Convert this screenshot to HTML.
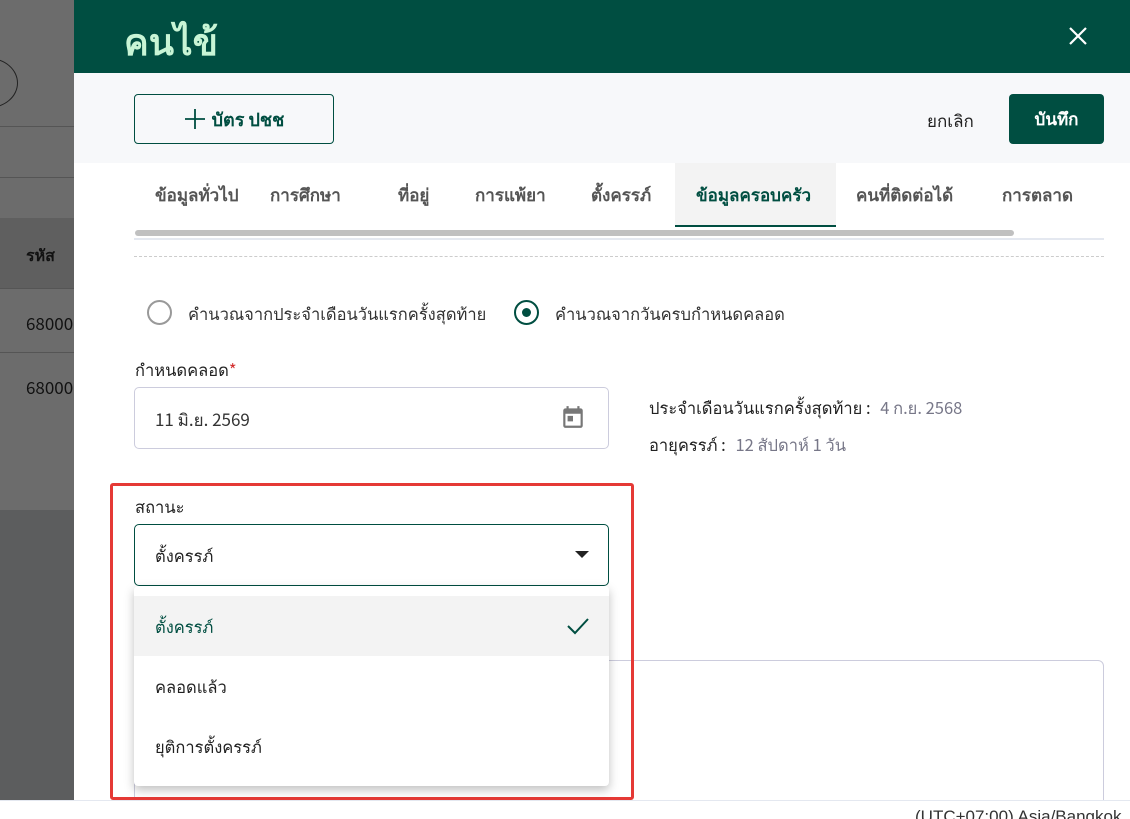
<!DOCTYPE html>
<html style="overflow:hidden;height:819px"><head><meta charset="utf-8"><style>
*{box-sizing:border-box;margin:0;padding:0}
body{width:1130px;height:819px;overflow:hidden;position:relative;background:#fff;font-family:"Liberation Sans","Noto Sans CJK SC",sans-serif;}
.th{font-family:"Noto Sans CJK SC","WenQuanYi Zen Hei",sans-serif}
.abs{position:absolute}
</style></head><body>
<div class="abs" style="left:0;top:0;width:74px;height:800px;background:#6c6c6c"></div>
<div class="abs" style="left:0;top:510px;width:74px;height:290px;background:#5c5d5e"></div>
<div class="abs" style="left:-40px;top:58px;width:58px;height:50px;border:1px solid #222;border-radius:50%"></div>
<div class="abs" style="left:0;top:126px;width:74px;border-top:1px solid #555"></div>
<div class="abs" style="left:0;top:177px;width:74px;border-top:1px solid #555"></div>
<div class="abs" style="left:0;top:218px;width:74px;height:70px;background:#5f5f5f"></div>
<div class="abs th" style="left:26px;top:242px;font-size:16px;font-weight:bold;color:#111">รหัส</div>
<div class="abs" style="left:0;top:288px;width:74px;border-top:1px solid #555"></div>
<div class="abs th" style="left:26px;top:310px;font-size:17px;color:#111">68000</div>
<div class="abs" style="left:0;top:352px;width:74px;border-top:1px solid #555"></div>
<div class="abs th" style="left:26px;top:374px;font-size:17px;color:#111">68000</div>

<div class="abs" style="left:74px;top:0;width:1056px;height:73px;background:#004e41"></div>
<div class="abs th" style="left:124px;top:14px;font-size:37px;font-weight:bold;color:#c8f5d6;line-height:50px">คนไข้</div>
<svg class="abs" style="left:1069px;top:27px" width="18" height="18" viewBox="0 0 18 18"><path d="M1 1L17 17M17 1L1 17" stroke="#fff" stroke-width="2.2"/></svg>
<div class="abs" style="left:74px;top:73px;width:1056px;height:90px;background:#f7f8fa"></div>
<div class="abs th" style="left:134px;top:94px;width:200px;height:50px;border:1px solid #004e41;border-radius:4px;display:flex;align-items:center;justify-content:center;font-size:18px;font-weight:bold;color:#004e41"><svg width="22" height="22" viewBox="0 0 22 22" style="margin-right:6px"><path d="M11 1V21M1 11H21" stroke="#004e41" stroke-width="1.8"/></svg>บัตร ปชช</div>
<div class="abs th" style="left:927px;top:107px;font-size:17px;color:#222">ยกเลิก</div>
<div class="abs th" style="left:1009px;top:94px;width:95px;height:50px;background:#004e41;border-radius:4px;color:#fff;font-weight:bold;font-size:17px;display:flex;align-items:center;justify-content:center">บันทึก</div>

<div class="abs th" style="left:74px;top:163px;width:1056px;height:64px;font-size:17px;font-weight:bold;color:#555;">
<span class="abs" style="left:81px;top:18px">ข้อมูลทั่วไป</span>
<span class="abs" style="left:196px;top:18px">การศึกษา</span>
<span class="abs" style="left:324px;top:18px">ที่อยู่</span>
<span class="abs" style="left:401px;top:18px">การแพ้ยา</span>
<span class="abs" style="left:517px;top:18px">ตั้งครรภ์</span>
<span class="abs" style="left:601px;top:0;width:161px;height:64px;background:#f3f3f3;border-bottom:2px solid #004e41"></span>
<span class="abs" style="left:622px;top:18px;color:#004e41">ข้อมูลครอบครัว</span>
<span class="abs" style="left:782px;top:18px">คนที่ติดต่อได้</span>
<span class="abs" style="left:928px;top:18px">การตลาด</span>
</div>
<div class="abs" style="left:135px;top:230px;width:879px;height:6px;background:#c0c0c0;border-radius:3px"></div>
<div class="abs" style="left:134px;top:238px;width:970px;border-top:2px solid #e4e8f0"></div>
<div class="abs" style="left:134px;top:256px;width:970px;border-top:1px dashed #ccc"></div>

<div class="abs" style="left:147px;top:300px;width:25px;height:25px;border:2px solid #999;border-radius:50%"></div>
<div class="abs th" style="left:188px;top:301px;font-size:16.5px;color:#333">คำนวณจากประจำเดือนวันแรกครั้งสุดท้าย</div>
<div class="abs" style="left:514px;top:300px;width:25px;height:25px;border:2px solid #004e41;border-radius:50%"><div style="margin:6px;width:9px;height:9px;background:#004e41;border-radius:50%"></div></div>
<div class="abs th" style="left:555px;top:301px;font-size:16.5px;color:#333">คำนวณจากวันครบกำหนดคลอด</div>

<div class="abs th" style="left:135px;top:357px;font-size:16.5px;color:#222">กำหนดคลอด<span style="color:#d32f2f">*</span></div>
<div class="abs" style="left:134px;top:387px;width:475px;height:62px;border:1px solid #ccd;border-radius:5px"></div>
<div class="abs th" style="left:155px;top:406px;font-size:17px;color:#333">11 มิ.ย. 2569</div>
<svg class="abs" style="left:560px;top:404px" width="26" height="26" viewBox="0 0 24 24"><path fill="#777" d="M19 4h-1V2h-2v2H8V2H6v2H5a2 2 0 0 0-2 2v14a2 2 0 0 0 2 2h14a2 2 0 0 0 2-2V6a2 2 0 0 0-2-2zm0 16H5V9h14zM7 11h5v5H7z"/></svg>
<div class="abs th" style="left:649px;top:395px;font-size:16.5px;color:#222">ประจำเดือนวันแรกครั้งสุดท้าย : <span style="color:#778;margin-left:6px">4 ก.ย. 2568</span></div>
<div class="abs th" style="left:649px;top:432px;font-size:16.5px;color:#222">อายุครรภ์ : <span style="color:#778;margin-left:6px">12 สัปดาห์ 1 วัน</span></div>

<div class="abs" style="left:134px;top:660px;width:970px;height:150px;border:1px solid #ccd;border-radius:6px"></div>
<div class="abs" style="left:0;top:800px;width:1130px;height:19px;background:#fff;border-top:1px solid #e4e8f0;overflow:hidden"><div class="abs" style="left:915px;top:6px;font-size:17px;color:#333;white-space:nowrap">(UTC+07:00) Asia/Bangkok</div></div>

<div class="abs" style="left:110px;top:483px;width:524px;height:317px;border:3px solid #e53935;border-radius:3px"></div>
<div class="abs th" style="left:135px;top:494px;font-size:16.5px;color:#222">สถานะ</div>
<div class="abs" style="left:134px;top:524px;width:475px;height:62px;border:1.5px solid #004e41;border-radius:5px"></div>
<div class="abs th" style="left:155px;top:543px;font-size:16.5px;color:#222">ตั้งครรภ์</div>
<div class="abs" style="left:575px;top:551px;border-left:7px solid transparent;border-right:7px solid transparent;border-top:7px solid #222"></div>
<div class="abs" style="left:134px;top:586px;width:475px;height:200px;background:#fff;border-radius:4px;box-shadow:0 4px 10px rgba(0,0,0,.25)">
<div style="margin-top:10px;height:60px;background:#f3f3f3;position:relative"><span class="th abs" style="left:21px;top:18px;font-size:16.5px;color:#004e41">ตั้งครรภ์</span><svg class="abs" style="left:432px;top:20px" width="24" height="20" viewBox="0 0 24 20"><path d="M2 10L9 17L22 3" fill="none" stroke="#004e41" stroke-width="2"/></svg></div>
<div class="th" style="height:60px;padding:18px 21px;font-size:16.5px;color:#222">คลอดแล้ว</div>
<div class="th" style="height:60px;padding:18px 21px;font-size:16.5px;color:#222">ยุติการตั้งครรภ์</div>
</div>
</body></html>
